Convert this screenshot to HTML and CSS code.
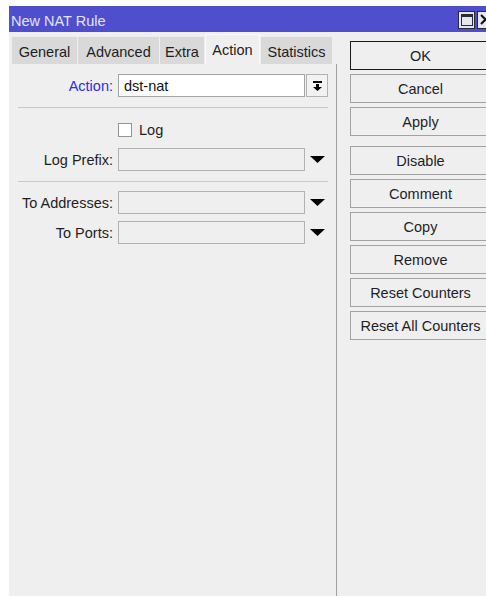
FILE: index.html
```html
<!DOCTYPE html>
<html lang="en">
<head>
<meta charset="utf-8">
<title>New NAT Rule</title>
<link rel="stylesheet" href="styles.css">
</head>
<body>
<div class="window">
  <div class="titlebar">
    <span class="title">New NAT Rule</span>
    <span class="tb-btn tb-max"><span class="tb-max-inner"></span></span>
    <span class="tb-btn tb-close">
      <svg width="11" height="11" viewBox="0 0 11 11"><path d="M1 1 L10 10 M10 1 L1 10" stroke="#111" stroke-width="2"/></svg>
    </span>
  </div>
  <div class="content">
    <div class="left">
      <div class="tabs">
        <div class="tab t-general">General</div>
        <div class="tab t-advanced">Advanced</div>
        <div class="tab t-extra">Extra</div>
        <div class="tab t-action active">Action</div>
        <div class="tab t-stats">Statistics</div>
      </div>
      <div class="form">
        <div class="row">
          <label class="lbl lbl-key">Action:</label>
          <div class="field field-white">dst-nat</div>
          <div class="drop-btn">
            <svg width="9" height="10" viewBox="0 0 9 10"><rect x="0" y="0" width="9" height="2" fill="#000"/><rect x="3" y="3" width="3" height="3" fill="#000"/><polygon points="0,6 9,6 4.5,10" fill="#000"/></svg>
          </div>
        </div>
        <div class="sep"></div>
        <div class="row row-check">
          <span></span>
          <div class="check-wrap"><span class="checkbox"></span><span class="check-label">Log</span></div>
        </div>
        <div class="row row-next">
          <label class="lbl">Log Prefix:</label>
          <div class="field"></div>
          <div class="tri"><svg width="15" height="7" viewBox="0 0 15 7"><polygon points="0,0 15,0 7.5,7" fill="#000"/></svg></div>
        </div>
        <div class="sep sep2"></div>
        <div class="row">
          <label class="lbl">To Addresses:</label>
          <div class="field"></div>
          <div class="tri"><svg width="15" height="7" viewBox="0 0 15 7"><polygon points="0,0 15,0 7.5,7" fill="#000"/></svg></div>
        </div>
        <div class="row row-next">
          <label class="lbl">To Ports:</label>
          <div class="field"></div>
          <div class="tri"><svg width="15" height="7" viewBox="0 0 15 7"><polygon points="0,0 15,0 7.5,7" fill="#000"/></svg></div>
        </div>
      </div>
    </div>
    <div class="right">
      <button class="btn btn-default">OK</button>
      <button class="btn">Cancel</button>
      <button class="btn">Apply</button>
      <button class="btn btn-group">Disable</button>
      <button class="btn">Comment</button>
      <button class="btn">Copy</button>
      <button class="btn">Remove</button>
      <button class="btn">Reset Counters</button>
      <button class="btn">Reset All Counters</button>
    </div>
  </div>
</div>
</body>
</html>
```

FILE: styles.css
```css
html, body {
  margin: 0;
  padding: 0;
  background: #ffffff;
  overflow: hidden;
}

body {
  font-family: "Liberation Sans", Arial, sans-serif;
  font-size: 14.5px;
  color: #1e1e1e;
}

.window {
  margin: 6px 0 0 9px;
  width: 500px;
  height: 590px;
  background: #efefef;
  display: flex;
  flex-direction: column;
}

/* title bar */
.titlebar {
  height: 26px;
  background: #4f4fcd;
  display: flex;
  align-items: center;
  padding: 0 15px 0 2px;
  flex-shrink: 0;
}

.title {
  color: #e4e4ff;
  flex: 1;
  padding-top: 3px;
}

.tb-btn {
  width: 15px;
  height: 16px;
  border: 1px solid #2a2a3a;
  background: #e6e6ee;
  box-sizing: content-box;
  display: flex;
  align-items: center;
  justify-content: center;
  margin-top: 1px;
}

.tb-max {
  margin-right: 2px;
}

.tb-max-inner {
  width: 10px;
  height: 8px;
  border: 1px solid #2a2a3a;
  border-top-width: 3px;
}

/* main area */
.content {
  flex: 1;
  display: flex;
}

.left {
  width: 328px;
  display: flex;
  flex-direction: column;
}

.tabs {
  height: 30px;
  margin-top: 2px;
  padding-left: 3px;
  display: flex;
  align-items: flex-end;
  gap: 1px;
}

.tab {
  height: 27px;
  box-sizing: border-box;
  background: #d9d9d9;
  display: flex;
  align-items: center;
  justify-content: center;
  padding-top: 2px;
  color: #1e1e1e;
  white-space: nowrap;
}

.t-general { width: 65px; }
.t-advanced { width: 81px; }
.t-extra { width: 44px; }
.t-action { width: 55px; }
.t-stats { width: 71px; }

.tab.active {
  height: 30px;
  background: #efefef;
  border: 1px solid #f9f9f9;
  border-bottom: none;
  padding-top: 0;
}

.form {
  flex: 1;
  border-right: 1px solid #a0a0a0;
  padding: 10px 0 0 9px;
}

.row {
  display: grid;
  grid-template-columns: 100px 187px 23px;
  height: 23px;
  align-items: center;
}

.row-next {
  margin-top: 7px;
}

.lbl {
  text-align: right;
  white-space: nowrap;
  color: #1e1e1e;
  padding-right: 5px;
}

.lbl-key {
  color: #2c2ce6;
}

.field {
  height: 23px;
  box-sizing: border-box;
  border: 1px solid #b2b2b2;
  background: #efefef;
  padding: 0 5px;
  display: flex;
  align-items: center;
}

.field-white {
  background: #ffffff;
  border-color: #a4a4a4;
  color: #111;
}

.drop-btn {
  width: 22px;
  height: 23px;
  box-sizing: border-box;
  margin-left: 1px;
  border: 1px solid #b2b2b2;
  background: #f2f2f2;
  display: flex;
  align-items: center;
  justify-content: center;
}

.tri {
  display: flex;
  align-items: center;
  padding-left: 5px;
  height: 23px;
}

.sep {
  width: 310px;
  height: 1px;
  background: #c8c8c8;
  margin: 10px 0 10px;
}

.sep2 {
  margin: 10px 0 9px;
}

.row-check {
  grid-template-columns: 100px 210px;
}

.check-wrap {
  display: flex;
  align-items: center;
  gap: 7px;
}

.checkbox {
  width: 14px;
  height: 14px;
  box-sizing: border-box;
  border: 1px solid #959595;
  background: #ffffff;
}

/* action buttons */
.right {
  padding: 9px 0 0 13px;
  display: flex;
  flex-direction: column;
  gap: 4px;
}

.btn {
  width: 141px;
  height: 29px;
  box-sizing: border-box;
  border: 1px solid #a2a2a2;
  background: #efefef;
  font-family: "Liberation Sans", Arial, sans-serif;
  font-size: 14.5px;
  color: #1e1e28;
  padding: 0;
  margin: 0;
  white-space: nowrap;
}

.btn-default {
  border-color: #1a1a1a;
}

.btn-group {
  margin-top: 6px;
}
```
